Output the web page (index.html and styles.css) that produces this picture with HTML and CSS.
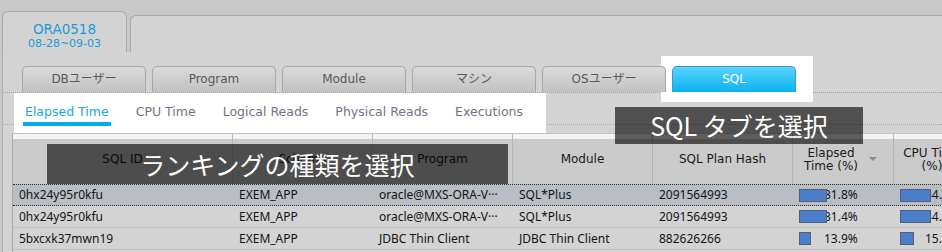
FILE: index.html
```html
<!DOCTYPE html>
<html lang="ja">
<head>
<meta charset="utf-8">
<title>SQL Ranking</title>
<link rel="stylesheet" href="styles.css">
</head>
<body>
<div class="app">
  <div class="top-tabs">
    <div class="db-tab active">
      <div class="db-name">ORA0518</div>
      <div class="db-range">08-28~09-03</div>
    </div>
    <div class="db-tab blank"></div>
  </div>
  <div class="panel">
    <div class="cat-tabs">
      <div class="cat-tab">DBユーザー</div>
      <div class="cat-tab">Program</div>
      <div class="cat-tab">Module</div>
      <div class="cat-tab">マシン</div>
      <div class="cat-tab">OSユーザー</div>
      <div class="sql-hl"><div class="cat-tab on">SQL</div></div>
    </div>
    <div class="sub-tabs">
      <div class="sub-hl">
        <span class="sub-tab on">Elapsed Time</span>
        <span class="sub-tab">CPU Time</span>
        <span class="sub-tab">Logical Reads</span>
        <span class="sub-tab">Physical Reads</span>
        <span class="sub-tab">Executions</span>
      </div>
    </div>
    <div class="grid">
      <div class="grid-head">
        <div class="hc">SQL ID</div>
        <div class="hc">Schema</div>
        <div class="hc">Program</div>
        <div class="hc">Module</div>
        <div class="hc">SQL Plan Hash</div>
        <div class="hc sort"><span class="hc-text">Elapsed<br>Time (%)</span><span class="arrow"></span></div>
        <div class="hc sort"><span class="hc-text">CPU Time<br>(%)</span><span class="arrow"></span></div>
      </div>
      <div class="row sel">
        <div class="c">0hx24y95r0kfu</div>
        <div class="c">EXEM_APP</div>
        <div class="c">oracle@MXS-ORA-V···</div>
        <div class="c">SQL*Plus</div>
        <div class="c">2091564993</div>
        <div class="c bar-cell"><span class="pct">31.8%</span><span class="bar" style="width:28px"></span></div>
        <div class="c bar-cell"><span class="pct">34.6%</span><span class="bar" style="width:31px"></span></div>
      </div>
      <div class="row">
        <div class="c">0hx24y95r0kfu</div>
        <div class="c">EXEM_APP</div>
        <div class="c">oracle@MXS-ORA-V···</div>
        <div class="c">SQL*Plus</div>
        <div class="c">2091564993</div>
        <div class="c bar-cell"><span class="pct">31.4%</span><span class="bar" style="width:28px"></span></div>
        <div class="c bar-cell"><span class="pct">34.2%</span><span class="bar" style="width:31px"></span></div>
      </div>
      <div class="row">
        <div class="c">5bxcxk37mwn19</div>
        <div class="c">EXEM_APP</div>
        <div class="c">JDBC Thin Client</div>
        <div class="c">JDBC Thin Client</div>
        <div class="c">882626266</div>
        <div class="c bar-cell"><span class="pct">13.9%</span><span class="bar" style="width:12px"></span></div>
        <div class="c bar-cell"><span class="pct">15.4%</span><span class="bar" style="width:14px"></span></div>
      </div>
      <div class="row">
        <div class="c">7fkq2m9zx0p3a</div>
        <div class="c">EXEM_APP</div>
        <div class="c">JDBC Thin Client</div>
        <div class="c">JDBC Thin Client</div>
        <div class="c">1378204551</div>
        <div class="c bar-cell"><span class="pct">12.6%</span><span class="bar" style="width:12px"></span></div>
        <div class="c bar-cell"><span class="pct">12.9%</span><span class="bar" style="width:12px"></span></div>
      </div>
    </div>
  </div>
  <div class="note note-rank">ランキングの種類を選択</div>
  <div class="note note-sql">SQL タブを選択</div>
</div>
</body>
</html>
```
FILE: styles.css
```css
html, body {
  margin: 0;
  padding: 0;
  overflow: hidden;
}
body {
  background: #c9c9c9;
  font-family: "DejaVu Sans", "Noto Sans CJK JP", sans-serif;
}
.app {
  position: relative;
  width: 942px;
  height: 252px;
  overflow: hidden;
}

/* top database tabs */
.top-tabs {
  display: flex;
  align-items: flex-end;
  height: 52px;
  padding-left: 2px;
}
.db-tab {
  box-sizing: border-box;
  background: #d3d3d3;
  border: 1px solid #a9a9a9;
  border-bottom: 0;
  border-radius: 6px 6px 0 0;
}
.db-tab.active {
  width: 125px;
  height: 41px;
  padding-top: 9px;
  color: #1b9ad8;
  text-align: center;
}
.db-name {
  font-size: 13.5px;
  line-height: 16px;
}
.db-range {
  font-size: 11px;
  line-height: 14px;
}
.db-tab.blank {
  flex: 1;
  height: 37px;
  margin-left: 3px;
  border-right: 0;
  border-radius: 6px 0 0 0;
}

/* panel */
.panel {
  background: #d3d3d3;
  margin-left: 2px;
  border-left: 1px solid #b3b3b3;
  height: 200px;
}
.cat-tabs {
  display: flex;
  align-items: flex-end;
  gap: 6px;
  height: 26px;
  padding: 14px 0 0 19px;
  border-bottom: 1px dotted #a3a3a3;
}
.cat-tab {
  position: relative;
  box-sizing: border-box;
  width: 124px;
  height: 26px;
  border: 1px solid #a8a8a8;
  border-bottom: 0;
  border-radius: 5px 5px 0 0;
  background: linear-gradient(#dadada, #c2c2c2);
  color: #5a5a5a;
  font-size: 12px;
  line-height: 25px;
  text-align: center;
}
.cat-tab.on {
  background: linear-gradient(#55d5ff, #0cb0f0);
  border-color: #4a95bd;
  color: #fff;
}
.sql-hl {
  background: #fff;
  padding: 10px 17px 10px 11px;
  margin: -10px -17px -10px -11px;
}

/* ranking sub tabs */
.sub-tabs {
  height: 31px;
  padding-left: 11px;
  border-bottom: 1px dotted #a8a8a8;
}
.sub-hl {
  box-sizing: border-box;
  width: 532px;
  height: 40px;
  background: #fff;
  display: flex;
  align-items: flex-end;
  gap: 23px;
  padding: 0 0 7px 9px;
}
.sub-tab {
  font-size: 12.5px;
  line-height: 16px;
  padding: 0 2px 2px;
  border-bottom: 4px solid transparent;
  color: #737384;
  white-space: nowrap;
}
.sub-tab.on {
  color: #17a6e6;
  border-bottom-color: #00aeef;
}

/* grid */
.grid {
  margin: 8px 0 0 9px;
  border-left: 1px solid #a8a8a8;
  border-top: 1px solid #c3c3c3;
  width: 1100px;
}
.grid-head,
.row {
  display: grid;
  grid-template-columns: 220px 140px 140px 140px 140px 101px 101px 60px;
}
.grid-head {
  height: 50px;
  background: linear-gradient(#f3f3f3 0, #f3f3f3 5px, #cbcbcb 5px);
}
.hc {
  box-sizing: border-box;
  border-right: 1px solid #b6b6b6;
  display: flex;
  align-items: center;
  justify-content: center;
  font-size: 12px;
  line-height: 13px;
  color: #1a1a1a;
  text-align: center;
  white-space: nowrap;
}
.hc.sort {
  padding-right: 16px;
}
.hc-text {
  flex: 1;
  padding-top: 1px;
}
.arrow {
  width: 0;
  height: 0;
  border-left: 4px solid transparent;
  border-right: 4px solid transparent;
  border-top: 4px solid #8a8a8a;
}
.row {
  height: 21px;
  line-height: 21px;
  background: #d3d3d3;
  border-bottom: 1px solid #bebebe;
  font-family: "Noto Sans", "Noto Sans CJK JP", sans-serif;
  font-size: 12px;
  color: #141414;
}
.row.sel {
  height: 20px;
  line-height: 20px;
  background: #b9bdc4;
  border-top: 1px dotted #303030;
  border-bottom: 1px dotted #303030;
}
.c {
  padding-left: 6px;
  white-space: nowrap;
  overflow: hidden;
}
.bar-cell {
  display: grid;
  align-items: center;
  padding-left: 0;
}
.bar-cell > span {
  grid-area: 1 / 1;
}
.pct {
  padding-left: 31px;
}
.bar {
  justify-self: start;
  box-sizing: border-box;
  height: 13px;
  margin-left: 6px;
  background: #4a7dca;
  border: 1px solid #56606e;
}

/* annotation labels */
.note {
  position: absolute;
  display: flex;
  align-items: center;
  justify-content: center;
  background: rgba(0, 0, 0, 0.62);
  color: #fff;
  font-family: "Noto Sans CJK JP", sans-serif;
  font-size: 25px;
  line-height: 1;
  white-space: nowrap;
}
.note-rank {
  left: 47px;
  top: 144px;
  width: 461px;
  height: 40px;
}
.note-sql {
  left: 615px;
  top: 107px;
  width: 248px;
  height: 37px;
}
```
